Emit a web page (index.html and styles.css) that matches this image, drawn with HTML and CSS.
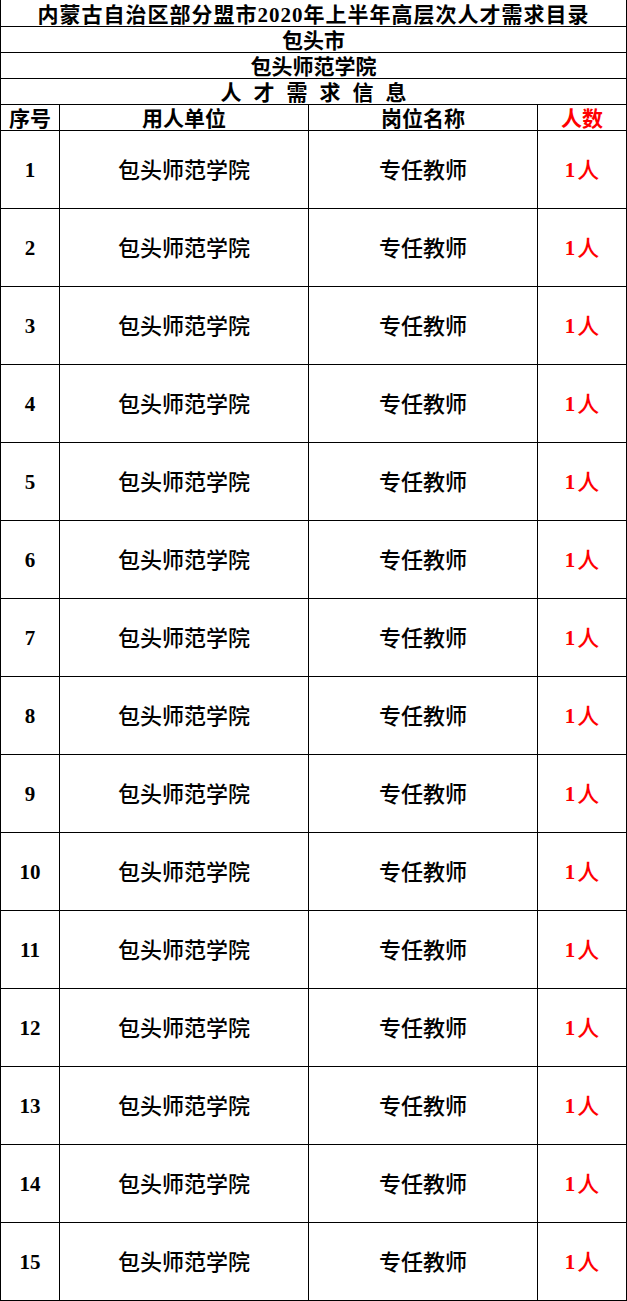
FILE: index.html
```html
<!DOCTYPE html>
<html lang="zh-CN">
<head>
<meta charset="utf-8">
<title>内蒙古自治区部分盟市2020年上半年高层次人才需求目录</title>
<link rel="stylesheet" href="styles.css">
</head>
<body>
<div class="sheet">
  <div class="cell span title">内蒙古自治区部分盟市2020年上半年高层次人才需求目录</div>
  <div class="cell span sub">包头市</div>
  <div class="cell span sub">包头师范学院</div>
  <div class="cell span sub spaced">人才需求信息</div>
  <div class="cell head">序号</div>
  <div class="cell head">用人单位</div>
  <div class="cell head">岗位名称</div>
  <div class="cell head red">人数</div>

  <div class="cell data num">1</div><div class="cell data">包头师范学院</div><div class="cell data">专任教师</div><div class="cell data red"><span class="n">1</span>人</div>
  <div class="cell data num">2</div><div class="cell data">包头师范学院</div><div class="cell data">专任教师</div><div class="cell data red"><span class="n">1</span>人</div>
  <div class="cell data num">3</div><div class="cell data">包头师范学院</div><div class="cell data">专任教师</div><div class="cell data red"><span class="n">1</span>人</div>
  <div class="cell data num">4</div><div class="cell data">包头师范学院</div><div class="cell data">专任教师</div><div class="cell data red"><span class="n">1</span>人</div>
  <div class="cell data num">5</div><div class="cell data">包头师范学院</div><div class="cell data">专任教师</div><div class="cell data red"><span class="n">1</span>人</div>
  <div class="cell data num">6</div><div class="cell data">包头师范学院</div><div class="cell data">专任教师</div><div class="cell data red"><span class="n">1</span>人</div>
  <div class="cell data num">7</div><div class="cell data">包头师范学院</div><div class="cell data">专任教师</div><div class="cell data red"><span class="n">1</span>人</div>
  <div class="cell data num">8</div><div class="cell data">包头师范学院</div><div class="cell data">专任教师</div><div class="cell data red"><span class="n">1</span>人</div>
  <div class="cell data num">9</div><div class="cell data">包头师范学院</div><div class="cell data">专任教师</div><div class="cell data red"><span class="n">1</span>人</div>
  <div class="cell data num">10</div><div class="cell data">包头师范学院</div><div class="cell data">专任教师</div><div class="cell data red"><span class="n">1</span>人</div>
  <div class="cell data num">11</div><div class="cell data">包头师范学院</div><div class="cell data">专任教师</div><div class="cell data red"><span class="n">1</span>人</div>
  <div class="cell data num">12</div><div class="cell data">包头师范学院</div><div class="cell data">专任教师</div><div class="cell data red"><span class="n">1</span>人</div>
  <div class="cell data num">13</div><div class="cell data">包头师范学院</div><div class="cell data">专任教师</div><div class="cell data red"><span class="n">1</span>人</div>
  <div class="cell data num">14</div><div class="cell data">包头师范学院</div><div class="cell data">专任教师</div><div class="cell data red"><span class="n">1</span>人</div>
  <div class="cell data num">15</div><div class="cell data">包头师范学院</div><div class="cell data">专任教师</div><div class="cell data red"><span class="n">1</span>人</div>
</div>
</body>
</html>
```

FILE: styles.css
```css
html, body {
  margin: 0;
  padding: 0;
  background: #ffffff;
}

.sheet {
  display: grid;
  grid-template-columns: 59px 249px 229px 89px;
  grid-template-rows: 27px 26px 26px 26px 26px repeat(15, 78px);
  width: 627px;
  border-left: 1px solid #000;
  box-sizing: border-box;
  font-family: "Liberation Serif", "Noto Sans CJK SC", serif;
  font-weight: 700;
  color: #000;
}

.cell {
  box-sizing: border-box;
  border-right: 1px solid #000;
  border-bottom: 1px solid #000;
  display: flex;
  align-items: center;
  justify-content: center;
  white-space: nowrap;
  line-height: 1;
}

.span {
  grid-column: 1 / -1;
}

.title {
  font-size: 21px;
  letter-spacing: 1px;
  padding-top: 5px;
}

.sub {
  font-size: 21px;
  padding-top: 3px;
}

.spaced {
  letter-spacing: 12px;
  padding-left: 12px;
}

.head {
  font-size: 21px;
  padding-top: 3px;
}

.data {
  font-size: 22px;
  font-weight: 500;
  padding-top: 2px;
}

.data.num,
.n {
  font-weight: 700;
  font-size: 21px;
}

.n {
  margin-right: 2px;
}

.red {
  color: #ff0000;
}
```
